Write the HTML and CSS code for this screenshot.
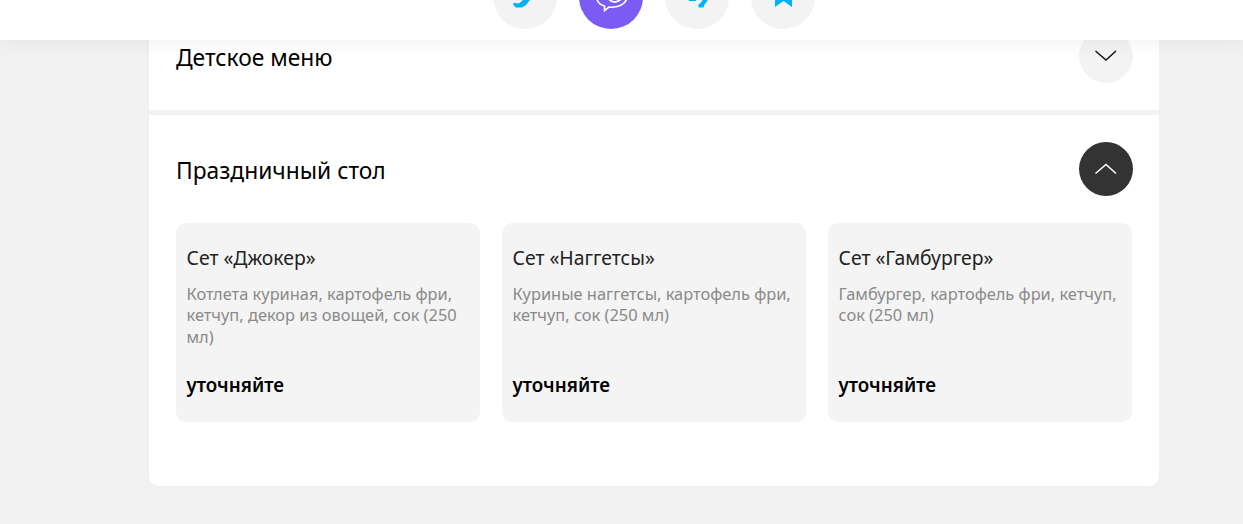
FILE: index.html
```html
<!DOCTYPE html>
<html lang="ru">
<head>
  <meta charset="UTF-8">
  <title>Детское меню</title>
  <link rel="stylesheet" href="styles.css">
</head>
<body>
  <header class="topbar">
    <a class="round-btn">
      <svg width="64" height="64" viewBox="0 -35 64 64"><path d="M40 -4L37 0 33 5 29 7.500 23 7.500 20 4.500 21 2.700 26 3.500 30 0 33 -4z" fill="#00b2f5"/></svg>
    </a>
    <a class="round-btn viber">
      <svg width="64" height="64" viewBox="0 -35 64 64">
        <path d="M17 -4C18 2 21 5 25.500 6L25.500 10.500 30 7C38 8 46 5 48 -2" fill="none" stroke="#fff" stroke-width="1.600"/>
        <path d="M30 -1C33 3 38 3 42 -1" fill="none" stroke="#fff" stroke-width="2"/>
      </svg>
    </a>
    <a class="round-btn">
      <svg width="64" height="64" viewBox="0 -35 64 64">
        <path d="M23 -3H31V1L24 1z" fill="#00b2f5"/>
        <path d="M46 -4L39.500 4.500 38.500 7.500 34 7.500 33 5 35 3.500 41 -4z" fill="#00b2f5"/>
      </svg>
    </a>
    <a class="round-btn">
      <svg width="64" height="64" viewBox="0 -35 64 64"><path d="M24 -5H41V7L32.500 1 24 7z" fill="#00b2f5"/></svg>
    </a>
  </header>

  <main class="menu-card">
    <section class="menu-row">
      <div class="row-head">
        <h3>Детское меню</h3>
        <button class="toggle">
          <svg width="24" height="24" viewBox="0 0 24 24"><path d="M1.500 7L12 16 22 7" fill="none" stroke="#111" stroke-width="1.500"/></svg>
        </button>
      </div>
    </section>

    <section class="menu-row">
      <div class="row-head">
        <h3>Праздничный стол</h3>
        <button class="toggle open">
          <svg width="24" height="24" viewBox="0 0 24 24"><path d="M1.500 16.500L12 7.500 22 16.500" fill="none" stroke="#fff" stroke-width="1.500"/></svg>
        </button>
      </div>
      <div class="sets">
        <div class="set">
          <div class="set-title">Сет «Джокер»</div>
          <div class="set-desc">Котлета куриная, картофель фри, кетчуп, декор из овощей, сок (250 мл)</div>
          <div class="set-price">уточняйте</div>
        </div>
        <div class="set">
          <div class="set-title">Сет «Наггетсы»</div>
          <div class="set-desc">Куриные наггетсы, картофель фри, кетчуп, сок (250 мл)</div>
          <div class="set-price">уточняйте</div>
        </div>
        <div class="set">
          <div class="set-title">Сет «Гамбургер»</div>
          <div class="set-desc">Гамбургер, картофель фри, кетчуп, сок (250 мл)</div>
          <div class="set-price">уточняйте</div>
        </div>
      </div>
    </section>
  </main>
</body>
</html>
```

FILE: styles.css
```css
html, body {
  height: 100%;
  overflow: hidden;
}

body {
  margin: 0;
  background: #f2f2f2;
  color: #000;
  font-family: "Noto Sans", "Open Sans", sans-serif;
}

.topbar {
  position: relative;
  z-index: 2;
  height: 40px;
  overflow: hidden;
  background: #fff;
  box-shadow: 0 4px 20px rgba(0,0,0,0.05);
  display: flex;
  justify-content: center;
  align-items: flex-end;
  gap: 22px;
  padding-left: 65px;
}

.round-btn {
  flex: none;
  width: 64px;
  height: 64px;
  margin-bottom: 11px;
  border-radius: 50%;
  background: #f3f3f3;
}

.round-btn svg {
  display: block;
}

.round-btn.viber {
  background: #7a5cf5;
}

.menu-card {
  width: 1010px;
  margin: -38px 0 0 149px;
  background: #fff;
  border-radius: 10px;
  padding-bottom: 37px;
  box-shadow: 0 0 8px rgba(0,0,0,0.02);
}

.menu-row {
  padding: 27px 26px 27px 27px;
  border-bottom: 5px solid #f3f3f3;
}

.menu-row:last-child {
  border-bottom: 0;
}

.row-head {
  display: flex;
  justify-content: space-between;
  align-items: center;
}

.row-head h3 {
  margin: 4px 0 0;
  font-size: 22.8px;
  line-height: 30px;
  font-weight: 400;
}

.toggle {
  width: 54px;
  height: 54px;
  padding: 0;
  border: none;
  border-radius: 50%;
  background: #f3f3f3;
  display: flex;
  justify-content: center;
  align-items: center;
}

.toggle.open {
  background: #333;
}

.sets {
  display: grid;
  grid-template-columns: repeat(3, 304px);
  gap: 22px;
  margin-top: 27px;
}

.set {
  height: 199px;
  box-sizing: border-box;
  padding: 22px 10px 0 10.500px;
  background: #f4f4f4;
  border-radius: 10px;
  display: flex;
  flex-direction: column;
}

.set-title {
  font-size: 19.4px;
  line-height: 26px;
  color: #222;
}

.set-desc {
  margin-top: 12px;
  font-size: 16.4px;
  line-height: 21.300px;
  color: #8a8a8a;
}

.set-price {
  margin-top: auto;
  margin-bottom: 24px;
  font-size: 18.8px;
  line-height: 26px;
  font-weight: 600;
}
```
